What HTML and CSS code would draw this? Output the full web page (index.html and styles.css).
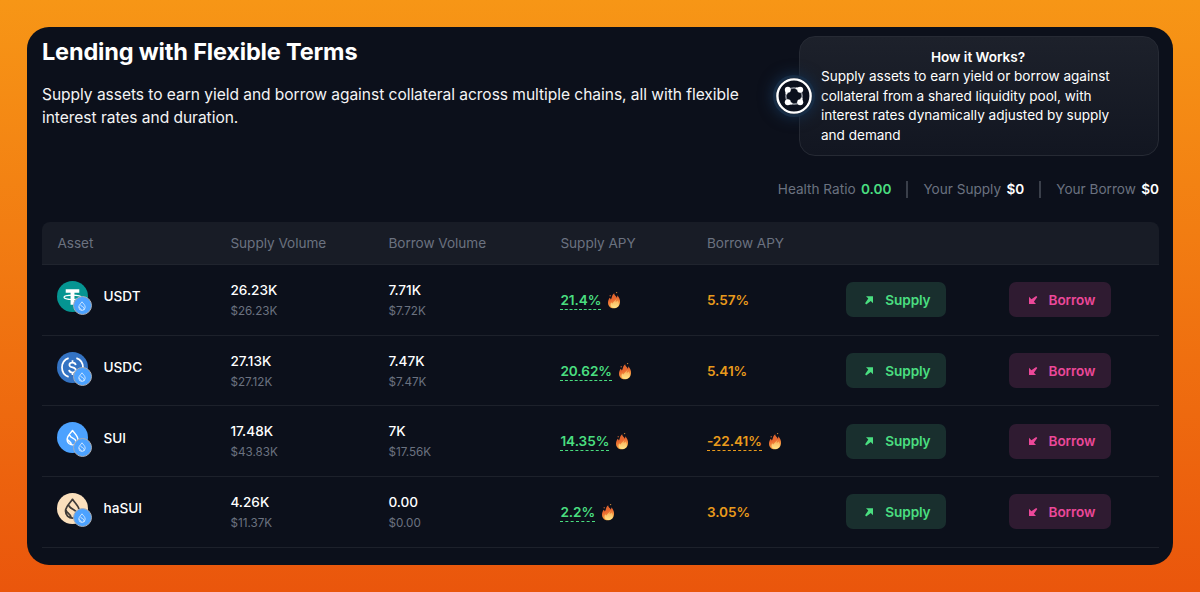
FILE: index.html
```html
<!DOCTYPE html>
<html lang="en">
<head>
<meta charset="utf-8">
<title>Lending</title>
<link rel="stylesheet" href="styles.css">
</head>
<body>
<svg class="defs" aria-hidden="true">
  <defs>
    <linearGradient id="flame" x1="0" y1="0" x2="0.3" y2="1"><stop offset="0" stop-color="#d9642f"/><stop offset=".5" stop-color="#e9682f"/><stop offset="1" stop-color="#ffb24a"/></linearGradient>
    <linearGradient id="core" x1="0" y1="0" x2="0" y2="1"><stop offset="0" stop-color="#f8a34c"/><stop offset="1" stop-color="#ffe58a"/></linearGradient>
    <symbol id="drop" viewBox="0 0 20 24"><path d="M10 1.500C13 6 18 9.500 18 15a8 8 0 0 1-16 0C2 9.500 7 6 10 1.500ZM6 8.500c.5 5 9 4 9 9.500 0 2-1 3.500-2 4.500M2.500 14c1 3.500 5 3.500 6 8.500" fill="none" stroke="currentColor" stroke-width="2" stroke-linejoin="round"/></symbol>
    <symbol id="fire" viewBox="0 0 14 18"><path d="M7.200 2.200c-.2 2.200 2 2.600 2.600 4.500.5-.7.600-1.500.4-2.400 2.200 2.200 3 4.500 2.800 7-.2 3.700-2.600 6-6 6-3.700 0-6-2.300-6-5.800 0-1.900.8-3.200 1.700-4.700.6.400.9 1 1 1.700C5.300 6.900 4.600 4 7.200 2.200Z" fill="url(#flame)"/><path d="M9.500 7c.2 2-1.200 2.600-.8 4 .7-.3 1.300-.8 1.600-1.500 1.200 1.100 1.800 2.600 1.500 4.200-.4 2-2 3.200-4.300 3.200s-4-1.200-4-3.200c0-1 .3-1.700.8-2.500.3.600.6 1 1.100 1.200C6.200 10.600 9.100 9.700 9.500 7Z" fill="url(#core)"/><circle cx="3.200" cy="4.800" r=".7" fill="#b55b34"/><circle cx="9.600" cy="1.600" r=".7" fill="#c7863a"/></symbol>
    <symbol id="up" viewBox="0 0 10 10"><path d="M2 1.200H9v7L6.800 6.100 2.200 9.400 1.100 8.300 4.300 3.600Z" fill="currentColor"/></symbol>
    <symbol id="down" viewBox="0 0 10 10"><path d="M1 1.800V8.900h7L5.900 6.700 9.300 2.100 8.200 1 3.400 4.200Z" fill="currentColor"/></symbol>
    <symbol id="usdt" viewBox="0 0 32 32"><circle cx="16" cy="16" r="16" fill="#059592"/><path d="M9 8.500h14V12H18v12.500H14V12H9Z" fill="#fff"/><ellipse cx="16" cy="16.800" rx="8.800" ry="2.300" fill="none" stroke="#fff" stroke-width="1.200"/></symbol>
    <symbol id="usdc" viewBox="0 0 32 32"><circle cx="16" cy="16" r="16" fill="#3473c3"/><path d="M12 6.300a10.300 10.300 0 0 0 0 19.400M20 6.300a10.300 10.300 0 0 1 0 19.400M19.300 13.500c-.2-1.800-1.500-2.600-3.300-2.600s-3.200.9-3.200 2.400c0 3.400 6.600 1.800 6.600 5.300 0 1.700-1.500 2.600-3.400 2.600s-3.400-.9-3.500-2.700M16 8.500v2.400M16 21.200v2.500" fill="none" stroke="#fff" stroke-width="1.800"/></symbol>
    <symbol id="sui" viewBox="0 0 32 32"><circle cx="16" cy="16" r="16" fill="#4ca2ff"/><use href="#drop" x="9" y="7.500" width="14" height="17" color="#fff"/></symbol>
    <symbol id="hasui" viewBox="0 0 32 32"><circle cx="16" cy="16" r="16" fill="#fbe0bd"/><use href="#drop" x="7" y="5" width="18" height="22" color="#3f3b38"/></symbol>
  </defs>
</svg>
<main class="panel">
  <header class="top">
    <div class="intro">
      <h1>Lending with Flexible Terms</h1>
      <p>Supply assets to earn yield and borrow against collateral across multiple chains, all with flexible<br>interest rates and duration.</p>
    </div>
    <aside class="how">
      <span class="badge"><svg viewBox="0 0 36 36"><circle cx="18" cy="18" r="16.600" fill="#0b101d" stroke="#fff" stroke-width="2.400"/><circle cx="18" cy="18" r="8.200" fill="none" stroke="#7d828c" stroke-width="1.800"/><g fill="#fff"><circle cx="11.800" cy="11.800" r="3"/><circle cx="24.200" cy="11.800" r="3"/><circle cx="11.800" cy="24.200" r="3"/><circle cx="24.200" cy="24.200" r="3"/></g><g fill="none" stroke="#fff" stroke-width="2" stroke-linecap="round"><path d="M10.500 12v3.500M24 10.500h-3.500M25.500 24v-3.500M12 25.500h3.500"/></g></svg></span>
      <h2>How it Works?</h2>
      <p>Supply assets to earn yield or borrow against<br>collateral from a shared liquidity pool, with<br>interest rates dynamically adjusted by supply<br>and demand</p>
    </aside>
  </header>
  <div class="stats">
    <span>Health Ratio <b class="green">0.00</b></span><i></i><span>Your Supply <b>$0</b></span><i></i><span>Your Borrow <b>$0</b></span>
  </div>
  <section class="table">
    <div class="row head"><span>Asset</span><span>Supply Volume</span><span>Borrow Volume</span><span>Supply APY</span><span>Borrow APY</span></div>
    <div class="row">
      <div class="asset"><span class="coin"><svg><use href="#usdt"/></svg><span class="chain"><svg><use href="#drop"/></svg></span></span>USDT</div>
      <div class="vol"><b>26.23K</b><small>$26.23K</small></div>
      <div class="vol"><b>7.71K</b><small>$7.72K</small></div>
      <div class="apy green"><span class="dash">21.4%</span><svg><use href="#fire"/></svg></div>
      <div class="apy amber"><span>5.57%</span></div>
      <button class="btn supply"><svg><use href="#up"/></svg>Supply</button>
      <button class="btn borrow"><svg><use href="#down"/></svg>Borrow</button>
    </div>
    <div class="row">
      <div class="asset"><span class="coin"><svg><use href="#usdc"/></svg><span class="chain"><svg><use href="#drop"/></svg></span></span>USDC</div>
      <div class="vol"><b>27.13K</b><small>$27.12K</small></div>
      <div class="vol"><b>7.47K</b><small>$7.47K</small></div>
      <div class="apy green"><span class="dash">20.62%</span><svg><use href="#fire"/></svg></div>
      <div class="apy amber"><span>5.41%</span></div>
      <button class="btn supply"><svg><use href="#up"/></svg>Supply</button>
      <button class="btn borrow"><svg><use href="#down"/></svg>Borrow</button>
    </div>
    <div class="row">
      <div class="asset"><span class="coin"><svg><use href="#sui"/></svg><span class="chain"><svg><use href="#drop"/></svg></span></span>SUI</div>
      <div class="vol"><b>17.48K</b><small>$43.83K</small></div>
      <div class="vol"><b>7K</b><small>$17.56K</small></div>
      <div class="apy green"><span class="dash">14.35%</span><svg><use href="#fire"/></svg></div>
      <div class="apy amber"><span class="dash">-22.41%</span><svg><use href="#fire"/></svg></div>
      <button class="btn supply"><svg><use href="#up"/></svg>Supply</button>
      <button class="btn borrow"><svg><use href="#down"/></svg>Borrow</button>
    </div>
    <div class="row">
      <div class="asset"><span class="coin"><svg><use href="#hasui"/></svg><span class="chain"><svg><use href="#drop"/></svg></span></span>haSUI</div>
      <div class="vol"><b>4.26K</b><small>$11.37K</small></div>
      <div class="vol"><b>0.00</b><small>$0.00</small></div>
      <div class="apy green"><span class="dash">2.2%</span><svg><use href="#fire"/></svg></div>
      <div class="apy amber"><span>3.05%</span></div>
      <button class="btn supply"><svg><use href="#up"/></svg>Supply</button>
      <button class="btn borrow"><svg><use href="#down"/></svg>Borrow</button>
    </div>
  </section>
</main>
</body>
</html>
```
FILE: styles.css
```css
* { box-sizing: border-box; }
body {
  margin: 0;
  height: 592px;
  padding: 27px;
  overflow: hidden;
  background: linear-gradient(180deg, #f79616 0%, #ea560c 100%);
  font-family: Inter, "Liberation Sans", sans-serif;
  color: #fff;
}
.defs { position: absolute; width: 0; height: 0; }
h1, h2, p { margin: 0; }
.panel {
  height: 538px;
  padding: 9px 14px 0 15px;
  border-radius: 22px;
  background: #0c101b;
}
.top { display: flex; justify-content: space-between; height: 120px; }
h1 { font-size: 23.5px; line-height: 32px; font-weight: 700; letter-spacing: -0.17px; white-space: nowrap; }
.intro p { margin-top: 14.500px; font-size: 15.55px; line-height: 23.400px; letter-spacing: -0.04px; white-space: nowrap; color: #f4f4f5; }
.how {
  position: relative;
  width: 360px;
  height: 120px;
  padding: 11px 21px;
  border: 1px solid #262a34;
  border-radius: 16px;
  background: linear-gradient(180deg, #1d212b, #121621);
  font-size: 13.6px;
  line-height: 19.400px;
  letter-spacing: -0.03px;
  white-space: nowrap;
}
.how h2 { padding-right: 2px; font-size: 13.6px; line-height: 19.400px; font-weight: 600; text-align: center; }
.badge {
  position: absolute;
  left: -24px;
  top: 41px;
  width: 36px;
  height: 36px;
  border-radius: 50%;
  box-shadow: 0 0 0 3px #172c44, 0 0 14px 4px #142c48;
}
.badge svg { display: block; width: 36px; height: 36px; }
.stats {
  display: flex;
  justify-content: flex-end;
  align-items: center;
  height: 66px;
  gap: 15px;
  font-size: 13.6px;
  color: #6b7280;
}
.stats b { margin-left: 1.500px; font-weight: 600; color: #fff; }
.stats i { width: 2px; height: 17px; background: #3a3f4a; }
.stats .green, .green { color: #4ade80; }
.amber { color: #e99a1c; }
.row {
  display: grid;
  grid-template-columns: 173px 158px 172px 146.500px 139px 163px 102px;
  height: 70.700px;
  padding-left: 15.400px;
  align-items: center;
  border-bottom: 1px solid #1d212b;
}
.head {
  height: 43px;
  border-radius: 8px 8px 0 0;
  background: #181c26;
  border-color: #20242e;
  font-size: 13.6px;
  letter-spacing: -0.03px;
  color: #6b7280;
}
.asset { display: flex; align-items: center; gap: 11px; margin: -7px 0 0 -0.500px; font-size: 13.6px; font-weight: 500; }
.coin { position: relative; width: 35.600px; height: 31px; }
.coin > svg { display: block; width: 31px; height: 31px; }
.chain {
  position: absolute;
  left: 16px;
  top: 15.500px;
  display: grid;
  place-items: center;
  width: 19px;
  height: 19px;
  border: 1px solid #a9adb5;
  border-radius: 50%;
  background: #4ca2ff;
}
.chain svg { width: 8px; height: 10px; color: #e5f1ff; }
.vol b { display: block; font-size: 13.6px; line-height: 20px; font-weight: 500; }
.vol small { display: block; margin-top: 2px; font-size: 11.7px; line-height: 18px; color: #6b7280; }
.apy { display: flex; align-items: center; font-size: 13.6px; font-weight: 600; letter-spacing: -0.05px; }
.apy span { padding-top: 1px; line-height: 18px; border-bottom: 1px solid transparent; }
.apy .dash { border-bottom: 1px dashed currentColor; }
.apy svg { width: 14px; height: 18px; margin-left: 6px; }
.btn {
  display: flex;
  align-items: center;
  justify-content: center;
  gap: 11px;
  width: 100px;
  height: 35px;
  padding: 0 0 0 3px;
  border: 0;
  border-radius: 7px;
  font: 600 13.6px Inter, "Liberation Sans", sans-serif;
  letter-spacing: -0.1px;
}
.btn svg { width: 10px; height: 10px; }
.supply { background: #192f2e; color: #4ade80; }
.borrow { width: 102px; background: #2f1b31; color: #ec4899; }
```
